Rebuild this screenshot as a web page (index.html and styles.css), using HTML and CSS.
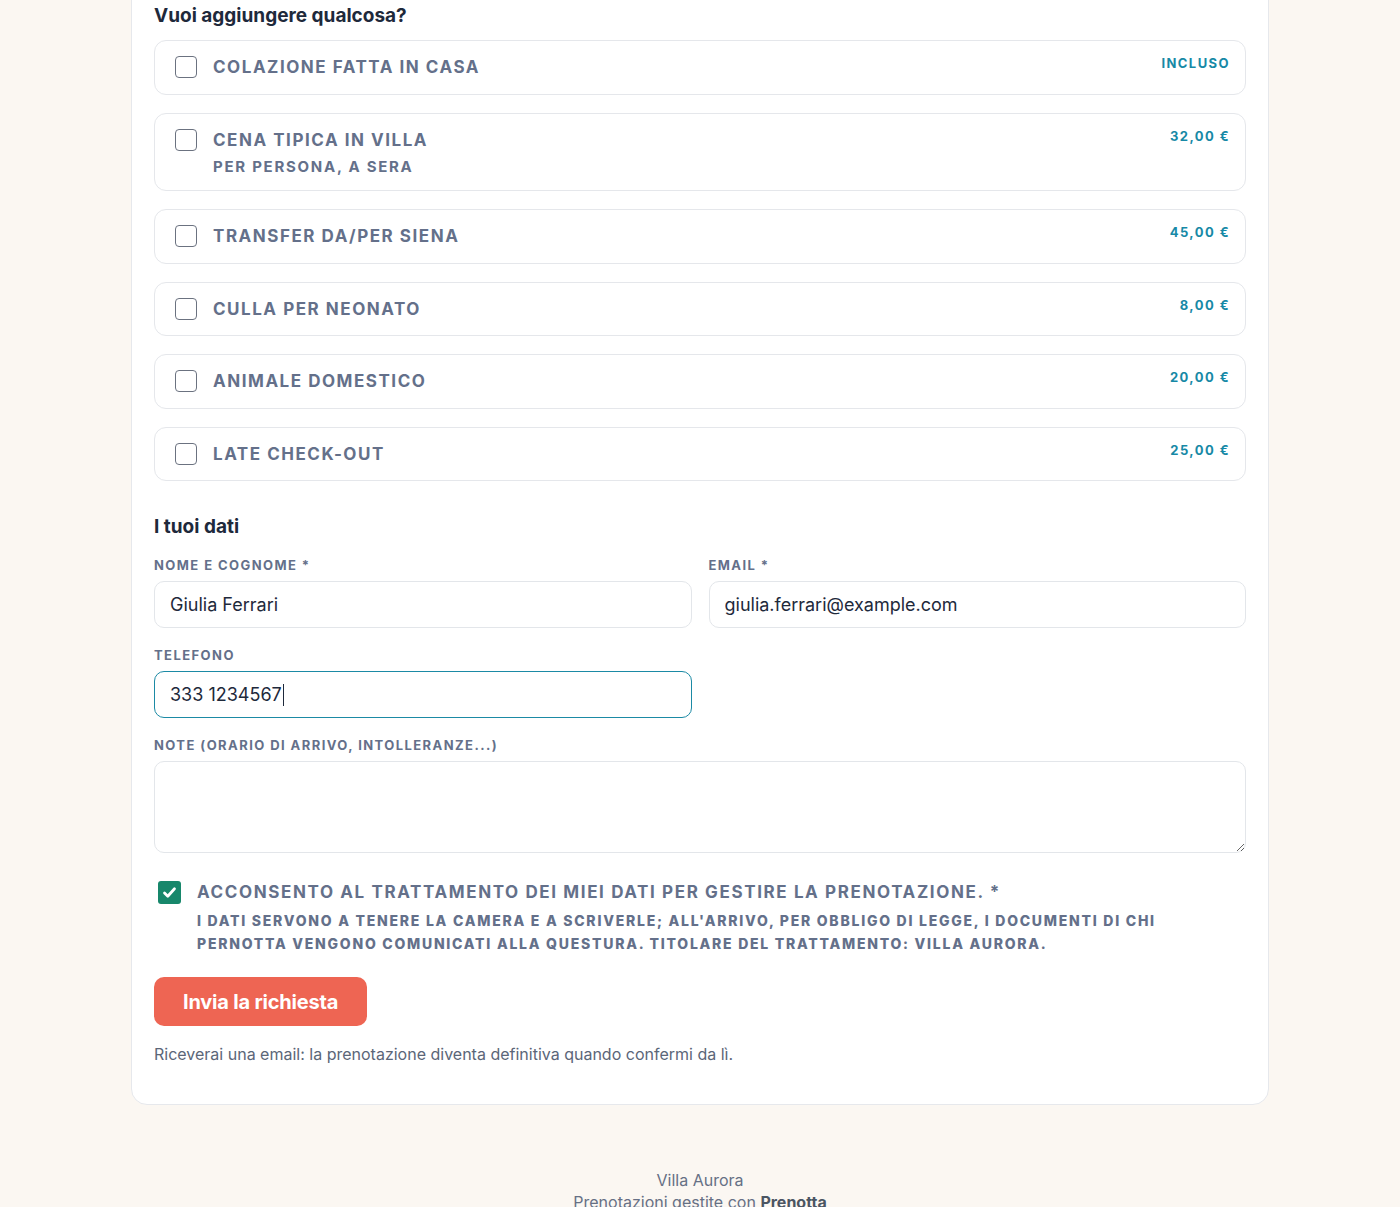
FILE: index.html
```html
<!DOCTYPE html>
<html lang="it">
<head>
<meta charset="utf-8">
<title>Villa Aurora – Prenota</title>
<link rel="stylesheet" href="styles.css">
</head>
<body>
<main class="card">
  <h2 class="section-title">Vuoi aggiungere qualcosa?</h2>
  <div class="extras">
    <label class="extra">
      <span class="box"></span>
      <span class="extra-text"><span class="extra-name">Colazione fatta in casa</span></span>
      <span class="price">Incluso</span>
    </label>
    <label class="extra">
      <span class="box"></span>
      <span class="extra-text"><span class="extra-name">Cena tipica in villa</span><span class="extra-sub">per persona, a sera</span></span>
      <span class="price">32,00 €</span>
    </label>
    <label class="extra">
      <span class="box"></span>
      <span class="extra-text"><span class="extra-name">Transfer da/per Siena</span></span>
      <span class="price">45,00 €</span>
    </label>
    <label class="extra">
      <span class="box"></span>
      <span class="extra-text"><span class="extra-name">Culla per neonato</span></span>
      <span class="price">8,00 €</span>
    </label>
    <label class="extra">
      <span class="box"></span>
      <span class="extra-text"><span class="extra-name">Animale domestico</span></span>
      <span class="price">20,00 €</span>
    </label>
    <label class="extra">
      <span class="box"></span>
      <span class="extra-text"><span class="extra-name">Late check-out</span></span>
      <span class="price">25,00 €</span>
    </label>
  </div>

  <h2 class="section-title data-title">I tuoi dati</h2>
  <div class="grid">
    <div class="field">
      <label class="field-label">Nome e cognome *</label>
      <input class="input" type="text" value="Giulia Ferrari">
    </div>
    <div class="field">
      <label class="field-label">Email *</label>
      <input class="input" type="email" value="giulia.ferrari@example.com">
    </div>
    <div class="field">
      <label class="field-label">Telefono</label>
      <div class="input input-focus"><span>333 1234567</span><span class="caret"></span></div>
    </div>
    <div class="field"></div>
    <div class="field full">
      <label class="field-label">Note (orario di arrivo, intolleranze...)</label>
      <textarea class="input textarea"></textarea>
    </div>
  </div>

  <label class="consent">
    <span class="box checked"><svg viewBox="0 0 16 16" width="17" height="17"><path d="M3.3 8.4l3.1 3.1 6.3-7" fill="none" stroke="#fff" stroke-width="2.6" stroke-linecap="round" stroke-linejoin="round"/></svg></span>
    <span class="consent-text">
      <span class="consent-main">Acconsento al trattamento dei miei dati per gestire la prenotazione. *</span>
      <span class="consent-sub">I dati servono a tenere la camera e a scriverle; all'arrivo, per obbligo di legge, i documenti di chi pernotta vengono comunicati alla Questura. Titolare del trattamento: Villa Aurora.</span>
    </span>
  </label>

  <button class="submit" type="button">Invia la richiesta</button>
  <p class="note">Riceverai una email: la prenotazione diventa definitiva quando confermi da lì.</p>
</main>

<footer class="footer">
  <p>Villa Aurora</p>
  <p>Prenotazioni gestite con <strong>Prenotta</strong></p>
</footer>
</body>
</html>
```

FILE: styles.css
```css
* { box-sizing: border-box; }

html, body {
  margin: 0;
  padding: 0;
}

body {
  background: #fbf7f2;
  font-family: Inter, "Noto Sans", "Liberation Sans", sans-serif;
  color: #1e293b;
}

.card {
  width: 1138px;
  margin: -25px auto 0;
  background: #ffffff;
  border: 1px solid #e6e8ec;
  border-radius: 16px;
  padding: 28px 22px 39px;
}

.section-title {
  margin: 0;
  font-size: 19px;
  line-height: 24px;
  font-weight: 700;
  color: #1e293b;
  letter-spacing: 0;
}

.extras {
  margin-top: 12px;
  display: flex;
  flex-direction: column;
  gap: 18px;
}

.extra {
  display: flex;
  align-items: flex-start;
  border: 1px solid #e5e7eb;
  border-radius: 12px;
  padding: 15px 15px 15px 20px;
}

.box {
  flex: none;
  width: 22px;
  height: 22px;
  border: 1.5px solid #6b7280;
  border-radius: 4px;
  background: #fff;
  display: flex;
  align-items: center;
  justify-content: center;
}

.extra-text {
  flex: 1;
  display: flex;
  flex-direction: column;
  margin-left: 16px;
}

.extra-name {
  font-size: 17px;
  line-height: 22.5px;
  font-weight: 700;
  letter-spacing: 0.09em;
  text-transform: uppercase;
  color: #64708a;
}

.extra-sub {
  margin-top: 7px;
  font-size: 15px;
  line-height: 17px;
  font-weight: 700;
  letter-spacing: 0.115em;
  text-transform: uppercase;
  color: #64708a;
}

.price {
  flex: none;
  font-size: 13px;
  line-height: 14px;
  font-weight: 700;
  letter-spacing: 0.11em;
  text-transform: uppercase;
  color: #1789a6;
}

.data-title {
  margin-top: 34px;
}

.grid {
  margin-top: 18px;
  display: grid;
  grid-template-columns: 1fr 1fr;
  column-gap: 17px;
  row-gap: 19px;
}

.field {
  display: flex;
  flex-direction: column;
}

.field.full {
  grid-column: 1 / -1;
}

.field-label {
  font-size: 13px;
  line-height: 16px;
  font-weight: 700;
  letter-spacing: 0.11em;
  text-transform: uppercase;
  color: #64708a;
  margin-bottom: 8px;
}

.input {
  height: 47px;
  border: 1px solid #e3e6ea;
  border-radius: 10px;
  padding: 0 15px;
  font-family: inherit;
  font-size: 18px;
  color: #1e293b;
  background: #fff;
  outline: none;
}

.input-focus {
  display: flex;
  align-items: center;
  height: 47px;
  border: 1.5px solid #1b8aa5;
}

.caret {
  display: inline-block;
  width: 1px;
  height: 22px;
  background: #1e293b;
  margin-left: 1px;
}

.textarea {
  height: 92px;
  resize: vertical;
  padding: 12px 15px;
}

.consent {
  margin-top: 28px;
  display: flex;
  align-items: flex-start;
  padding-left: 4px;
}

.box.checked {
  width: 23px;
  height: 23px;
  border: none;
  border-radius: 3px;
  background: #17876b;
}

.consent-text {
  display: flex;
  flex-direction: column;
  margin-left: 16px;
}

.consent-main {
  font-size: 17px;
  line-height: 22px;
  font-weight: 700;
  letter-spacing: 0.095em;
  text-transform: uppercase;
  color: #64708a;
}

.consent-sub {
  margin-top: 6px;
  font-size: 14px;
  line-height: 23px;
  font-weight: 800;
  letter-spacing: 0.125em;
  text-transform: uppercase;
  color: #64708a;
}

.submit {
  margin-top: 22px;
  display: block;
  height: 49px;
  padding: 0 29px;
  border: none;
  border-radius: 10px;
  background: #ee6553;
  color: #fff;
  font-family: inherit;
  font-size: 20px;
  font-weight: 700;
  letter-spacing: -0.01em;
}

.note {
  margin: 17px 0 0;
  font-size: 16px;
  line-height: 22px;
  color: #5b6678;
}

.footer {
  margin-top: 64px;
  text-align: center;
  font-size: 16px;
  line-height: 22px;
  color: #667085;
}

.footer p {
  margin: 0;
}

.footer strong {
  color: #4b5563;
  font-weight: 700;
}
```
